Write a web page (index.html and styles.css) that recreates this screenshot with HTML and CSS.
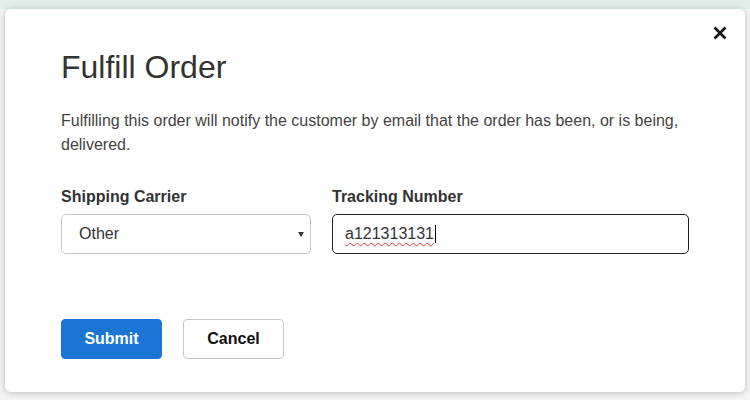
FILE: index.html
```html
<!DOCTYPE html>
<html lang="en">
<head>
<meta charset="utf-8">
<title>Fulfill Order</title>
<link rel="stylesheet" href="styles.css">
</head>
<body>
<div class="modal">
  <button class="close" aria-label="Close">
    <svg width="14" height="14" viewBox="0 0 14 14"><path d="M1.5 1.5L12.5 12.5M12.5 1.5L1.5 12.5" stroke="#111" stroke-width="2.6" stroke-linecap="butt"/></svg>
  </button>
  <h1 class="title">Fulfill Order</h1>
  <p class="desc">Fulfilling this order will notify the customer by email that the order has been, or is being, delivered.</p>
  <div class="fields">
    <div class="field">
      <label class="label">Shipping Carrier</label>
      <div class="select">
        <span>Other</span>
        <svg class="arrow" width="6" height="5" viewBox="0 0 6 5"><path d="M0 0H6L3 5Z" fill="#333"/></svg>
      </div>
    </div>
    <div class="field">
      <label class="label">Tracking Number</label>
      <div class="input"><span class="typed">a121313131</span><span class="caret"></span></div>
    </div>
  </div>
  <div class="actions">
    <button class="btn btn-primary">Submit</button>
    <button class="btn btn-default">Cancel</button>
  </div>
</div>
</body>
</html>
```
FILE: styles.css
```css
html, body {
  margin: 0;
  padding: 0;
}
body {
  width: 750px;
  height: 400px;
  overflow: hidden;
  background: linear-gradient(#e0ede8 0, #e0ede8 9px, #f3f3f3 9px);
  font-family: "Liberation Sans", Arial, sans-serif;
  color: #333;
}
.modal {
  position: relative;
  margin: 9px 5px 0 5px;
  padding: 40px 56px 33px 56px;
  background: #fff;
  border-radius: 6px;
  box-shadow: 0 1px 6px rgba(0, 0, 0, 0.22);
}
.close {
  position: absolute;
  top: 17px;
  right: 18px;
  width: 14px;
  height: 14px;
  padding: 0;
  border: 0;
  background: none;
  display: flex;
}
.title {
  margin: 0;
  font-size: 32px;
  line-height: 36px;
  font-weight: normal;
  color: #333;
}
.desc {
  margin: 24px 0 0 0;
  font-size: 16px;
  line-height: 24px;
  color: #444;
}
.fields {
  margin-top: 30px;
  display: grid;
  grid-template-columns: 250px 1fr;
  column-gap: 21px;
}
.label {
  display: block;
  font-size: 16px;
  line-height: 20px;
  font-weight: bold;
  color: #333;
  margin-bottom: 7px;
}
.select, .input {
  box-sizing: border-box;
  height: 40px;
  border-radius: 5px;
  display: flex;
  align-items: center;
  font-size: 16px;
  color: #333;
}
.select {
  border: 1px solid #c4c8cc;
  padding: 0 6px 0 17px;
  justify-content: space-between;
}
.input {
  border: 1px solid #222;
  padding: 0 12px;
}
.typed {
  text-decoration: underline wavy #e33;
  text-decoration-thickness: 1px;
  text-underline-offset: 3px;
}
.caret {
  display: inline-block;
  width: 1px;
  height: 18px;
  background: #000;
  margin-left: 1px;
}
.actions {
  margin-top: 65px;
  display: flex;
  gap: 21px;
}
.btn {
  box-sizing: border-box;
  width: 101px;
  height: 40px;
  border-radius: 4px;
  font-family: "Liberation Sans", Arial, sans-serif;
  font-size: 16px;
  font-weight: bold;
  padding: 0;
}
.btn-primary {
  background: #1a76d2;
  border: 1px solid #1a76d2;
  color: #fff;
}
.btn-default {
  background: #fff;
  border: 1px solid #c4c8cc;
  color: #111;
}
```
